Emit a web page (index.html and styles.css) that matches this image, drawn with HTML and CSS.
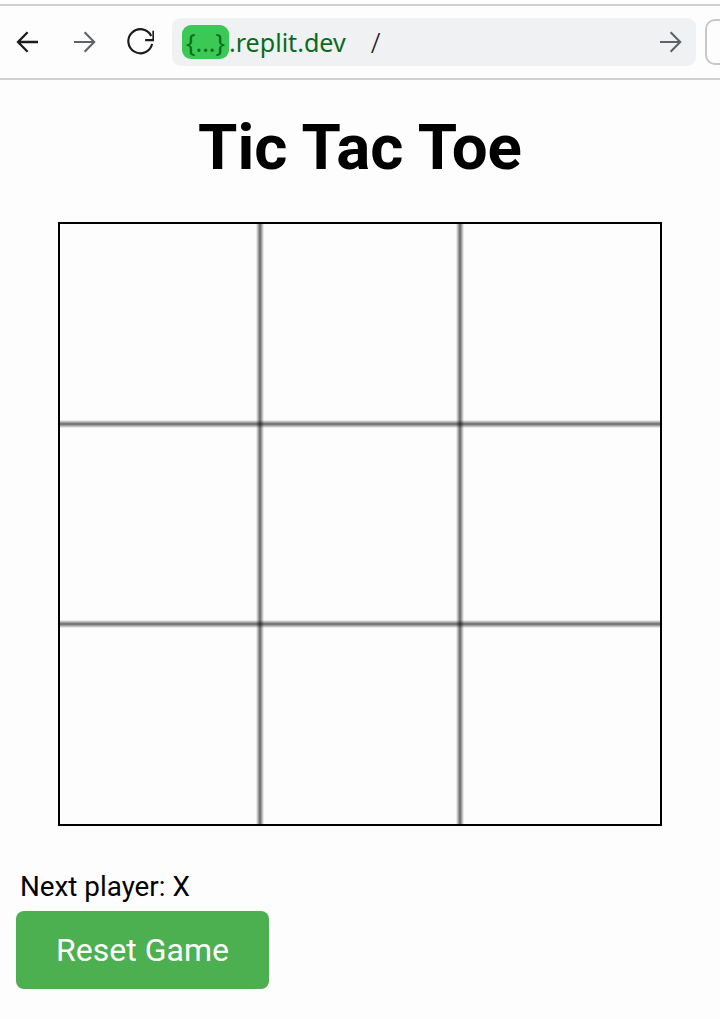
FILE: index.html
```html
<!DOCTYPE html>
<html lang="en">
<head>
<meta charset="utf-8">
<title>Tic Tac Toe</title>
<link rel="stylesheet" href="styles.css">
</head>
<body>
<header class="toolbar">
  <button class="nav-btn" aria-label="Back">
    <svg class="icon" viewBox="0 0 28 28"><path d="M24 14H4.5M13.6 4.2 4 14l9.6 9.8" class="stroke-dark"/></svg>
  </button>
  <button class="nav-btn" aria-label="Forward">
    <svg class="icon" viewBox="0 0 28 28"><path d="M4 14h20M14.6 4.2 24.2 14l-9.6 9.8" class="stroke-grey"/></svg>
  </button>
  <button class="nav-btn" aria-label="Reload">
    <svg class="icon" viewBox="0 0 30 30"><path d="M28 17A12.9 12.9 0 1 1 27 8.5M29.4 3v10H20.5" class="stroke-dark"/></svg>
  </button>
  <div class="address">
    <span class="repl-id">{...}</span><span class="domain">.replit.dev</span><span class="path">/</span>
    <svg class="icon go" viewBox="0 0 28 28"><path d="M4 14h20M14.6 4.2 24.2 14l-9.6 9.8" class="stroke-grey"/></svg>
  </div>
  <div class="tab-stub"></div>
</header>
<main class="game">
  <h1 class="title">Tic Tac Toe</h1>
  <div class="board">
    <div class="cell"></div><div class="cell"></div><div class="cell"></div>
    <div class="cell"></div><div class="cell"></div><div class="cell"></div>
    <div class="cell"></div><div class="cell"></div><div class="cell"></div>
  </div>
  <p class="status">Next player: X</p>
  <button class="reset">Reset Game</button>
</main>
</body>
</html>
```
FILE: styles.css
```css
* { box-sizing: border-box; }
html, body { margin: 0; height: 100%; }
body {
  background: #fdfdfd;
  font-family: Roboto, "Liberation Sans", sans-serif;
  color: #000;
  overflow: hidden;
}
.toolbar {
  display: flex;
  align-items: center;
  height: 76px;
  margin-top: 4px;
  border-top: 2px solid #d0d0d0;
  border-bottom: 2px solid #d0d0d0;
  background: #fdfdfd;
}
.nav-btn {
  flex: none;
  display: flex;
  align-items: center;
  justify-content: center;
  width: 28px;
  height: 30px;
  margin: 0 14px;
  padding: 0;
  border: 0;
  background: none;
}
.icon { width: 28px; height: 28px; fill: none; display: block; }
.nav-btn:nth-child(3) .icon { width: 30px; height: 30px; }
.stroke-dark { stroke: #1b1b1f; stroke-width: 2.3; fill: none; }
.stroke-grey { stroke: #5f6368; stroke-width: 2.1; fill: none; }
.address {
  flex: none;
  display: flex;
  align-items: center;
  width: 524px;
  height: 48px;
  margin-left: 4px;
  padding-left: 10px;
  background: #eff1f3;
  border-radius: 9px;
  font-family: "Noto Sans", sans-serif;
  font-size: 25.1px;
}
.repl-id {
  display: flex;
  align-items: center;
  justify-content: center;
  width: 47px;
  height: 34px;
  background: #3ac954;
  border-radius: 9px;
  color: #0b6b1d;
}
.domain { color: #0b6b1d; }
.path { margin-left: 25px; color: #1b1b1f; font-size: 28px; font-weight: 300; }
.go { margin-left: auto; margin-right: 12px; }
.tab-stub {
  flex: none;
  width: 40px;
  height: 46px;
  margin-left: 9px;
  border: 2px solid #c8c8c8;
  border-right: 0;
  border-radius: 10px 0 0 10px;
}
.game { padding: 0 16px; }
.title {
  margin: 30px 0 37px;
  text-align: center;
  font-size: 63.6px;
  line-height: 75px;
  font-weight: 700;
}
.board {
  display: grid;
  grid-template-columns: repeat(3, 200px);
  grid-template-rows: repeat(3, 200px);
  width: 604px;
  height: 604px;
  margin: 0 auto;
  border: 2px solid #000;
}
.cell {
  --line: rgba(0, 0, 0, .6);
  --l: transparent;
  --r: transparent;
  --t: transparent;
  --b: transparent;
  background-image:
    linear-gradient(to right, var(--l), transparent),
    linear-gradient(to left, var(--r), transparent),
    linear-gradient(to bottom, var(--t), transparent),
    linear-gradient(to top, var(--b), transparent);
  background-size: 4px 100%, 4px 100%, 100% 4px, 100% 4px;
  background-position: left, right, top, bottom;
  background-repeat: no-repeat;
}
.cell:not(:nth-child(3n+1)) { --l: var(--line); }
.cell:not(:nth-child(3n)) { --r: var(--line); }
.cell:nth-child(n+4) { --t: var(--line); }
.cell:nth-child(-n+6) { --b: var(--line); }
.status {
  margin: 45px 0 8px;
  padding-left: 4px;
  font-size: 27.8px;
  line-height: 32px;
}
.reset {
  display: block;
  width: 253px;
  height: 78px;
  padding: 0;
  border: 0;
  border-radius: 8px;
  background: #4caf50;
  color: #fff;
  font-family: inherit;
  font-size: 32px;
}
```
